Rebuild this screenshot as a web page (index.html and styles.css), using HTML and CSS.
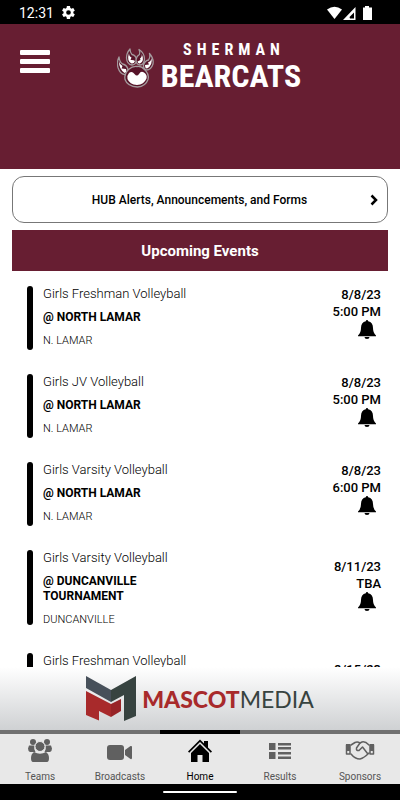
FILE: index.html
```html
<!DOCTYPE html>
<html lang="en">
<head>
    <meta charset="UTF-8">
    <meta name="viewport" content="width=device-width, initial-scale=1.0">
    <title>Sherman Bearcats</title>
    <link rel="stylesheet" href="styles.css">
</head>
<body>
    <div class="status-bar">
        <span>12:31</span>
        <svg viewBox="2 2 20 20" width="13" height="13"><path fill="#fff" fill-rule="evenodd" d="M19.4 13a7 7 0 0 0 0-2l2.100-1.600a.5.5 0 0 0 .1-.6l-2-3.500a.5.5 0 0 0-.6-.2l-2.500 1a7.500 7.500 0 0 0-1.700-1L14.400 2.400a.5.5 0 0 0-.5-.4h-4a.5.5 0 0 0-.5.4L9 5.100a7.500 7.500 0 0 0-1.700 1l-2.500-1a.5.5 0 0 0-.6.2l-2 3.500a.5.5 0 0 0 .1.6L4.500 11a7 7 0 0 0 0 2l-2.200 1.600a.5.5 0 0 0-.1.6l2 3.500c.1.200.4.300.6.2l2.500-1a7.500 7.500 0 0 0 1.700 1l.4 2.700c0 .200.200.4.5.4h4c.300 0 .5-.2.5-.4l.4-2.700a7.500 7.500 0 0 0 1.700-1l2.500 1c.200.1.5 0 .6-.2l2-3.500a.5.5 0 0 0-.1-.6zM12 15.600a3.600 3.600 0 1 1 0-7.200 3.600 3.600 0 0 1 0 7.200z"/></svg>
        <svg class="signals" viewBox="0 0 46 14" width="46" height="14">
            <path fill="#fff" d="M0 3.500Q7.500-2 15 3.500L7.500 13z"/>
            <path fill="#fff" fill-rule="evenodd" d="M16 14L28.500 1V14zM23 12.500H27V6.500L22.500 11z"/>
            <path fill="#fff" d="M38 0h4v1.500h3V14h-9V1.500h2z"/>
        </svg>
    </div>

    <header class="header">
        <button class="menu-btn" aria-label="Menu">
            <span></span>
            <span></span>
            <span></span>
        </button>
        <div class="logo">
            <svg viewBox="0 0 37 40" width="37" height="40">
                <g fill="#571429" stroke="#a49a9d" stroke-width="1.300" stroke-linejoin="round">
                    <path d="M13 1Q9.500 5 9.500 10q.5 6.500 5.500 7 4.500-.5 4.500-5.500-.5-4-4.500-5Q13 4.500 13 1z"/>
                    <path d="M22 1.500q5.500 3.500 5.500 9.500-.5 6-4.500 6-4-.5-4-5 .5-4 3.500-5.500Q23.500 4.500 22 1.500z"/>
                    <path d="M2 9Q-.5 14 1 19.500 3 26 7.500 26.500q4-.5 3.500-5Q10 17 5.500 16 2.500 14 2 9z"/>
                    <path d="M32.500 5.500q4.500 5 3.500 10.500-2 6-6.500 6-3.500-1-3-5 1-4 5-5Q33.500 9.500 32.500 5.500z"/>
                    <path d="M20 18.500q4.500-.5 7.500 3 5 4.500 3.500 10-2.500 7-10.500 7.500-10-.5-12.500-7.500-1-5.500 3.500-10 4-3.500 8.500-3z"/>
                </g>
                <g fill="#fff">
                    <path d="M12 5q0 3.500 2.500 4.500l-1 2.500q3-.5 4.500 1-1 3-3.500 2.500Q9.500 13 12 5z"/>
                    <path d="M24.500 5.500q1 3-1.500 5l.5 1.500-3 1.500q.5 2.500 2.500 2 5-2.500 1.500-10z"/>
                    <path d="M2 13.500q1 3.500 3.500 4.500l-1 2.500 4.500.5q1 3.500-1.500 4Q2 21 2 13.500z"/>
                    <path d="M34.500 10q-.5 3.500-3.500 4.500l1 2-4 .5q0 3.500 2 3.500 6-3 4.500-10.500z"/>
                    <path d="M12 25q3-2.500 5.500 1 2.500 3 4.500 0 2-3.500 5-1.500 3.500 2.500 2.500 6-2.500 6-9.500 6.500-7.500-.5-9.500-6-.5-4 1.500-6z"/>
                </g>
            </svg>
            <div class="logo-text">
                <span class="logo-city">SHERMAN</span>
                <span class="logo-name">BEARCATS</span>
            </div>
        </div>
    </header>

    <main class="content">
        <button class="alerts-btn">
            <span>HUB Alerts, Announcements, and Forms</span>
            <svg viewBox="0 0 8 12" width="8" height="12"><path d="M1.500 1.500L6 6l-4.500 4.500" fill="none" stroke="#000" stroke-width="2.500"/></svg>
        </button>
        <h2 class="section-title">Upcoming Events</h2>

        <article class="event">
            <div class="event-bar"></div>
            <div class="event-info">
                <p class="sport">Girls Freshman Volleyball</p>
                <h3>@ NORTH LAMAR</h3>
                <p class="place">N. LAMAR</p>
            </div>
            <div class="event-time">
                <span>8/8/23</span>
                <span>5:00 PM</span>
                <button class="bell" aria-label="Notify me"><svg viewBox="0 0 18 20" width="18" height="20"><use href="#bell"/></svg></button>
            </div>
        </article>

        <article class="event">
            <div class="event-bar"></div>
            <div class="event-info">
                <p class="sport">Girls JV Volleyball</p>
                <h3>@ NORTH LAMAR</h3>
                <p class="place">N. LAMAR</p>
            </div>
            <div class="event-time">
                <span>8/8/23</span>
                <span>5:00 PM</span>
                <button class="bell" aria-label="Notify me"><svg viewBox="0 0 18 20" width="18" height="20"><use href="#bell"/></svg></button>
            </div>
        </article>

        <article class="event">
            <div class="event-bar"></div>
            <div class="event-info">
                <p class="sport">Girls Varsity Volleyball</p>
                <h3>@ NORTH LAMAR</h3>
                <p class="place">N. LAMAR</p>
            </div>
            <div class="event-time">
                <span>8/8/23</span>
                <span>6:00 PM</span>
                <button class="bell" aria-label="Notify me"><svg viewBox="0 0 18 20" width="18" height="20"><use href="#bell"/></svg></button>
            </div>
        </article>

        <article class="event tall">
            <div class="event-bar"></div>
            <div class="event-info">
                <p class="sport">Girls Varsity Volleyball</p>
                <h3>@ DUNCANVILLE TOURNAMENT</h3>
                <p class="place">DUNCANVILLE</p>
            </div>
            <div class="event-time">
                <span>8/11/23</span>
                <span>TBA</span>
                <button class="bell" aria-label="Notify me"><svg viewBox="0 0 18 20" width="18" height="20"><use href="#bell"/></svg></button>
            </div>
        </article>

        <article class="event tall">
            <div class="event-bar"></div>
            <div class="event-info">
                <p class="sport">Girls Freshman Volleyball</p>
            </div>
            <div class="event-time">
                <span>8/15/23</span>
            </div>
        </article>
    </main>

    <a class="sponsor" href="#">
        <svg viewBox="0 0 50 45" width="50" height="45">
            <path fill="#47505a" d="M0 0L25 14v12L0 12z"/>
            <path fill="#374340" d="M25 14L50 0v40L38 45V19L25 26z"/>
            <path fill="#a82a2b" d="M0 15l25 13v13l-12-6v9.500L0 39z"/>
            <path fill="#982427" d="M25 28l10-5v12l-10 6z"/>
        </svg>
        <span class="sponsor-name"><b>MASCOT</b>MEDIA</span>
    </a>

    <nav class="tabs">
        <a class="tab" href="#">
            <svg viewBox="0 0 26 24" width="26" height="24" fill="#606060">
                <circle cx="6" cy="4" r="3"/><circle cx="20" cy="4" r="3"/>
                <path d="M2 7.500h5.500Q6.500 11 8.500 14H3Q1 13 1 10.500zM24 7.500h-5.500Q19.500 11 17.500 14H23q2-1 2-3.500z"/>
                <circle cx="13" cy="8.500" r="5" stroke="#e8e8e8"/>
                <path d="M7 14q6 3.500 12 0 3 2 3 6 0 4-2 4H6q-2 0-2-4 0-4 3-6z"/>
            </svg>
            <span>Teams</span>
        </a>
        <a class="tab" href="#">
            <svg viewBox="0 0 26 24" width="26" height="24" fill="#606060">
                <rect x="0" y="7" width="17" height="15" rx="3"/>
                <path d="M18 12l5.500-4q1.500-.5 1.500 1v11q0 1.500-1.500 1L18 17z"/>
            </svg>
            <span>Broadcasts</span>
        </a>
        <a class="tab active" href="#">
            <svg viewBox="0 0 26 24" width="26" height="24" fill="#000">
                <path d="M13 1.500l4 4V3h4v6.500l4 4-1.200 1.200L13 4 2.200 14.700 1 13.500z"/>
                <path d="M13 6l9 9v10h-6.500v-8h-5v8H4V15z"/>
            </svg>
            <span>Home</span>
        </a>
        <a class="tab" href="#">
            <svg viewBox="0 0 26 24" width="26" height="24" fill="#606060">
                <path d="M2 5h6.500v7H2zM2 14h6.500v7H2zM11 5h13v2.500H11zM11 9h13v2.500H11zM11 14h13v2.500H11zM11 18.500h13V21H11z"/>
            </svg>
            <span>Results</span>
        </a>
        <a class="tab" href="#">
            <svg viewBox="0 0 30 24" width="30" height="24">
                <g fill="none" stroke="#606060" stroke-width="1.500" stroke-linejoin="round" stroke-linecap="round">
                    <path d="M6 7l4-2.500q2.500-1 5 .5l2-1q3-1 7 3M6 16q4 5 9 5 4-1 9-6"/>
                    <path d="M15 5l-3.500 5q-.5 3 2.500 2.500l3.500-3.500 5 6.500"/>
                    <path d="M1.500 7H5v9H1.500zM25 7h3.500v9H25z"/>
                </g>
                <path fill="#606060" d="M1 6h4v7H1zM25 6h4v7h-4z"/>
            </svg>
            <span>Sponsors</span>
        </a>
    </nav>

    <div class="system-nav"><div class="handle"></div></div>

    <svg class="sprite" width="0" height="0" aria-hidden="true">
        <symbol id="bell" viewBox="0 0 18 20">
            <path d="M9 0q1 0 1.200 1.300Q15 2.500 15 8q0 5 3 7.500v.8H0v-.8Q3 13 3 8q0-5.500 4.800-6.700Q8 0 9 0zM6.500 17h5q0 2-2.500 2t-2.500-2z"/>
        </symbol>
    </svg>
</body>
</html>
```
FILE: styles.css
```css
* {
    box-sizing: border-box;
}
body {
    margin: 0;
    height: 100vh;
    display: flex;
    flex-direction: column;
    overflow: hidden;
    font-family: Roboto, sans-serif;
    background-color: #fff;
    color: #000;
}
button {
    border: none;
    padding: 0;
    background: none;
    font-family: inherit;
    color: inherit;
    cursor: pointer;
}
a {
    text-decoration: none;
}
svg {
    display: block;
}

/* Status bar */
.status-bar {
    display: flex;
    align-items: center;
    gap: 8px;
    height: 24px;
    flex-shrink: 0;
    padding: 1px 27px 0 19px;
    background-color: #000;
    color: #fff;
    font-size: 14px;
}
.signals {
    margin-left: auto;
}

/* Header */
.header {
    display: grid;
    grid-template-columns: 1fr auto 1fr;
    align-items: start;
    height: 145px;
    flex-shrink: 0;
    padding: 18px 20px 0;
    background-color: #671e32;
}
.menu-btn {
    display: flex;
    flex-direction: column;
    gap: 4px;
    width: 30px;
    padding-top: 8px;
}
.menu-btn span {
    width: 30px;
    height: 5px;
    border-radius: 1px;
    background-color: #fff;
}
.logo {
    display: flex;
    align-items: center;
    gap: 7px;
    padding-left: 18px;
    color: #fff;
}
.logo-text {
    display: flex;
    flex-direction: column;
    align-items: center;
    font-family: "Liberation Sans Narrow", "Roboto Condensed", Roboto, sans-serif;
    font-weight: bold;
}
.logo-city {
    padding-left: 6px;
    font-size: 16px;
    line-height: 16px;
    letter-spacing: 5px;
}
.logo-name {
    font-size: 32px;
    line-height: 36px;
}

/* Event list */
.content {
    flex: 1;
    min-height: 0;
    overflow: hidden;
    padding: 7px 12px 0;
}
.alerts-btn {
    display: flex;
    align-items: center;
    width: 100%;
    height: 47px;
    margin-bottom: 7px;
    padding: 0 9px 0 16px;
    border: 1px solid #777;
    border-radius: 12px;
    background-color: #fff;
    font-size: 12px;
    font-weight: 500;
}
.alerts-btn span {
    flex: 1;
}
.section-title {
    height: 41px;
    margin: 0 0 7px;
    background-color: #671e32;
    color: #fff;
    font-size: 15px;
    font-weight: bold;
    line-height: 43px;
    text-align: center;
}
.event {
    display: grid;
    grid-template-columns: 6px 1fr auto;
    column-gap: 10px;
    padding: 0 7px 0 15px;
}
.event.tall {
    min-height: 103px;
}
.event-bar {
    height: 73%;
    margin-top: 8px;
    border-radius: 3px;
    background-color: #000;
}
.event-info {
    max-width: 160px;
    padding: 8px 0 18px;
}
.event-info p,
.event-info h3 {
    margin: 0;
    line-height: 15px;
}
.event-info .sport {
    font-size: 13px;
    font-weight: 300;
}
.event-info h3 {
    max-width: 120px;
    margin: 9px 0 8px;
    font-size: 12px;
    font-weight: bold;
}
.event-info .place {
    font-size: 11px;
    font-weight: 300;
}
.event-time {
    display: flex;
    flex-direction: column;
    align-items: flex-end;
    padding-top: 8px;
    font-size: 13px;
    font-weight: 500;
    line-height: 17px;
}
.event.tall .event-time {
    padding-top: 16px;
}
.bell {
    margin-right: 5px;
}

/* Sponsor banner */
.sponsor {
    display: flex;
    align-items: center;
    justify-content: center;
    gap: 6px;
    height: 63px;
    flex-shrink: 0;
    background: linear-gradient(#fff, #cfd1d3);
}
.sponsor-name {
    font-family: Lato, sans-serif;
    font-size: 23px;
    color: #374340;
}
.sponsor-name b {
    font-weight: 900;
    color: #a82a2b;
}

/* Bottom tabs */
.tabs {
    display: grid;
    grid-template-columns: repeat(5, 1fr);
    height: 54px;
    flex-shrink: 0;
    background-color: #e8e8e8;
}
.tab {
    display: flex;
    flex-direction: column;
    align-items: center;
    gap: 8px;
    padding-top: 4px;
    border-top: 4px solid #707070;
    color: #555;
    font-size: 10px;
    line-height: 14px;
}
.tab.active {
    border-top-color: #000;
    color: #000;
}
.system-nav {
    display: flex;
    align-items: center;
    justify-content: center;
    height: 16px;
    flex-shrink: 0;
    background-color: #000;
}
.handle {
    width: 74px;
    height: 2px;
    border-radius: 1px;
    background-color: #fff;
}
.sprite {
    position: absolute;
}
```
